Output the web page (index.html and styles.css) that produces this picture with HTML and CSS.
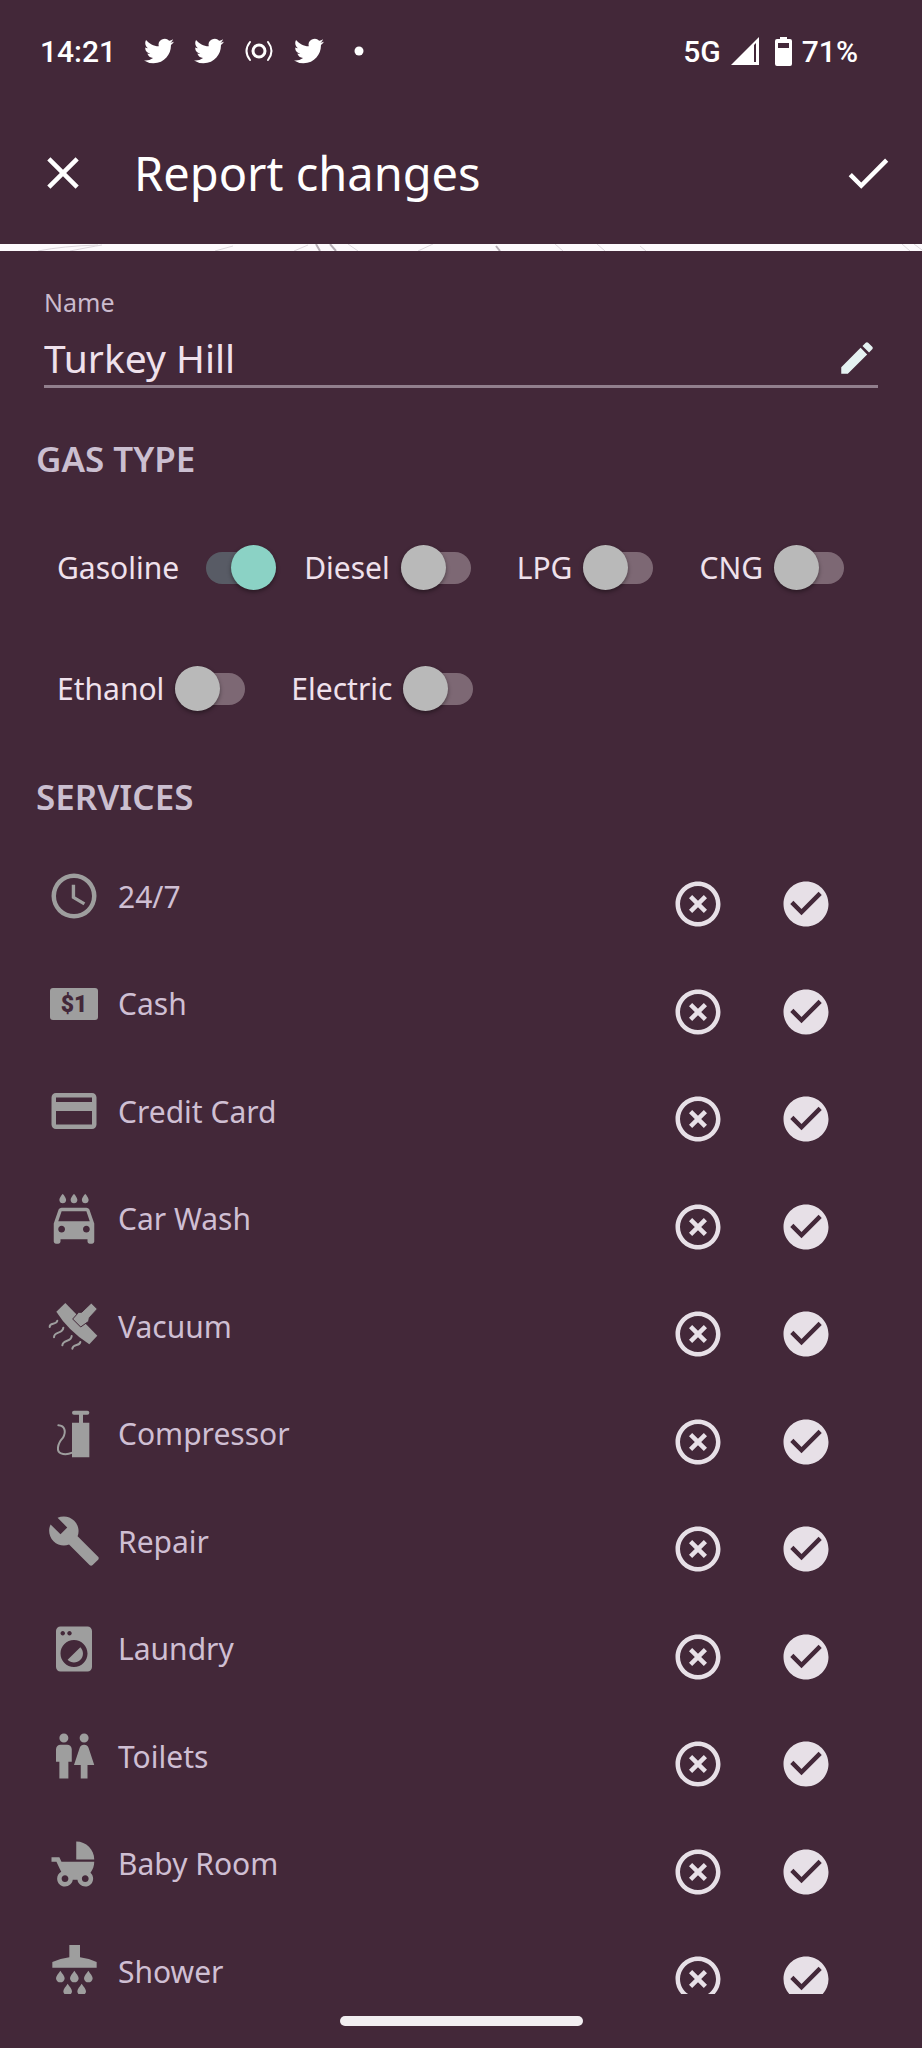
FILE: index.html
```html
<!DOCTYPE html>
<html lang="en">
<head>
  <meta charset="UTF-8">
  <meta name="viewport" content="width=device-width, initial-scale=1.0">
  <title>Report changes</title>
  <link rel="stylesheet" href="styles.css">
</head>
<body>

<!-- Shared icons -->
<svg class="sprite" aria-hidden="true">
  <symbol id="bird" viewBox="0 0 24 24"><path d="M23.953 4.57a10 10 0 01-2.825.775 4.958 4.958 0 002.163-2.723c-.951.555-2.005.959-3.127 1.184a4.92 4.92 0 00-8.384 4.482C7.69 8.095 4.067 6.13 1.64 3.162a4.822 4.822 0 00-.666 2.475c0 1.71.87 3.213 2.188 4.096a4.904 4.904 0 01-2.228-.616v.06a4.923 4.923 0 003.946 4.827 4.996 4.996 0 01-2.212.085 4.936 4.936 0 004.604 3.417 9.867 9.867 0 01-6.102 2.105c-.39 0-.779-.023-1.17-.067a13.995 13.995 0 007.557 2.209c9.053 0 13.998-7.496 13.998-13.985 0-.21 0-.42-.015-.63A9.935 9.935 0 0024 4.59z"/></symbol>
  <symbol id="no" viewBox="0 0 24 24"><path d="M14.59 8L12 10.59 9.41 8 8 9.41 10.59 12 8 14.59 9.41 16 12 13.41 14.59 16 16 14.59 13.41 12 16 9.41 14.59 8zM12 2C6.47 2 2 6.47 2 12s4.47 10 10 10 10-4.47 10-10S17.53 2 12 2zm0 18c-4.41 0-8-3.59-8-8s3.59-8 8-8 8 3.59 8 8-3.59 8-8 8z"/></symbol>
  <symbol id="yes" viewBox="0 0 24 24"><path d="M12 2C6.48 2 2 6.48 2 12s4.48 10 10 10 10-4.48 10-10S17.52 2 12 2zm-2 15l-5-5 1.41-1.41L10 14.17l7.59-7.59L19 8l-9 9z"/></symbol>
</svg>

<div class="status-bar">
  <span class="clock">14:21</span>
  <div class="notifications">
    <svg><use href="#bird"/></svg>
    <svg><use href="#bird"/></svg>
    <svg viewBox="0 0 30 30" class="line"><circle cx="15" cy="15" r="6" stroke-width="3"/><path d="M6 6q-7 9 0 18M24 6q7 9 0 18" stroke-width="2"/></svg>
    <svg><use href="#bird"/></svg>
    <svg viewBox="0 0 30 30"><circle cx="15" cy="15" r="4.5"/></svg>
  </div>
  <div class="system">
    <span>5G</span>
    <svg class="signal" viewBox="0 0 28 28"><path fill-rule="evenodd" d="M28 0v28H0zM23 8v17h2V6z"/></svg>
    <svg class="battery" viewBox="0 0 17 29"><path fill-rule="evenodd" d="M5 0h7v2h3q2 0 2 2v23q0 2-2 2H2q-2 0-2-2V4q0-2 2-2h3zM3 6v5h11V6z"/></svg>
    <span>71%</span>
  </div>
</div>

<header class="app-bar">
  <button class="icon-btn" aria-label="Close">
    <svg viewBox="0 0 24 24"><path d="M19 6.41L17.59 5 12 10.59 6.41 5 5 6.41 10.59 12 5 17.59 6.41 19 12 13.41 17.59 19 19 17.59 13.41 12z"/></svg>
  </button>
  <h1>Report changes</h1>
  <button class="icon-btn" aria-label="Save">
    <svg viewBox="0 0 24 24"><path d="M9 16.17L4.83 12l-1.42 1.41L9 19 21 7l-1.41-1.41z"/></svg>
  </button>
</header>

<!-- Sliver of the map above the form -->
<div class="map">
  <svg viewBox="0 0 922 7" preserveAspectRatio="none">
    <path d="M38 7q25-5 60-6M70 7q20-4 32-6M215 7l18-5M294 7l14-6M348 0l10 7M433 0l-15 7M555 0l8 7M597 0l8 7M640 2l6 5M902 0l8 7M914 0l8 6"/>
    <path class="road" d="M316 0l4 7M330 0l6 7M496 2l4 5"/>
  </svg>
</div>

<main>
  <div class="name">
    <label for="name">Name</label>
    <div class="field">
      <input type="text" id="name" value="Turkey Hill">
      <svg viewBox="0 0 24 24"><path d="M3 17.25V21h3.75L17.81 9.94l-3.75-3.75L3 17.25zM20.71 7.04c.39-.39.39-1.02 0-1.41l-2.34-2.34c-.39-.39-1.02-.39-1.41 0l-1.83 1.83 3.75 3.75 1.83-1.83z"/></svg>
    </div>
  </div>

  <h2>GAS TYPE</h2>
  <div class="fuels">
    <label class="fuel on">Gasoline <input type="checkbox" checked></label>
    <label class="fuel">Diesel <input type="checkbox"></label>
    <label class="fuel">LPG <input type="checkbox"></label>
    <label class="fuel">CNG <input type="checkbox"></label>
    <label class="fuel">Ethanol <input type="checkbox"></label>
    <label class="fuel">Electric <input type="checkbox"></label>
  </div>

  <h2>SERVICES</h2>
  <ul class="services">
    <li>
      <svg viewBox="0 0 24 24"><path d="M12 2a10 10 0 100 20 10 10 0 000-20zm0 18a8 8 0 110-16 8 8 0 010 16zM12.5 7H11v6l5.25 3.15.75-1.23-4.5-2.67z"/></svg>
      <span>24/7</span>
      <div class="choice">
        <button aria-label="No 24/7"><svg><use href="#no"/></svg></button>
        <button aria-label="Has 24/7"><svg><use href="#yes"/></svg></button>
      </div>
    </li>
    <li>
      <svg viewBox="0 0 54 54"><rect x="3" y="11" width="48" height="32" rx="3"/><text class="bill" x="27" y="35" text-anchor="middle">$1</text></svg>
      <span>Cash</span>
      <div class="choice">
        <button aria-label="No cash"><svg><use href="#no"/></svg></button>
        <button aria-label="Has cash"><svg><use href="#yes"/></svg></button>
      </div>
    </li>
    <li>
      <svg viewBox="0 0 24 24"><path d="M20 4H4c-1.11 0-1.99.89-1.99 2L2 18c0 1.11.89 2 2 2h16c1.11 0 2-.89 2-2V6c0-1.11-.89-2-2-2zm0 14H4v-6h16v6zm0-10H4V6h16v2z"/></svg>
      <span>Credit Card</span>
      <div class="choice">
        <button aria-label="No credit card"><svg><use href="#no"/></svg></button>
        <button aria-label="Has credit card"><svg><use href="#yes"/></svg></button>
      </div>
    </li>
    <li>
      <svg viewBox="0 0 24 24"><path d="M17 5c.83 0 1.5-.67 1.5-1.5 0-1-1.5-2.7-1.5-2.7s-1.5 1.7-1.5 2.7c0 .83.67 1.5 1.5 1.5zm-5 0c.83 0 1.5-.67 1.5-1.5 0-1-1.5-2.7-1.5-2.7s-1.5 1.7-1.5 2.7c0 .83.67 1.5 1.5 1.5zM7 5c.83 0 1.5-.67 1.5-1.5C8.5 2.5 7 .8 7 .8S5.5 2.5 5.5 3.5C5.5 4.33 6.17 5 7 5zm11.92 3.01C18.72 7.42 18.16 7 17.5 7h-11c-.66 0-1.21.42-1.42 1.01L3 14v8c0 .55.45 1 1 1h1c.55 0 1-.45 1-1v-1h12v1c0 .55.45 1 1 1h1c.55 0 1-.45 1-1v-8l-2.08-5.99zM6.5 18c-.83 0-1.5-.67-1.5-1.5S5.67 15 6.5 15s1.5.67 1.5 1.5S7.33 18 6.5 18zm11 0c-.83 0-1.5-.67-1.5-1.5s.67-1.5 1.5-1.5 1.5.67 1.5 1.5-.67 1.5-1.5 1.5zM5 13l1.5-4.5h11L19 13H5z"/></svg>
      <span>Car Wash</span>
      <div class="choice">
        <button aria-label="No car wash"><svg><use href="#no"/></svg></button>
        <button aria-label="Has car wash"><svg><use href="#yes"/></svg></button>
      </div>
    </li>
    <li>
      <svg viewBox="0 0 162 162"><path d="M55 12L28 38q35 56 99 98l24-26z"/><path class="cut" d="M133 12l18 18-24 26-2 11-24 17-24-24 18-20h9z"/><path class="line" d="M8 84c-1-16 20-4 23-19M21 115c0-20 26-8 28-29M46 139c2-20 27-8 28-28M76 149c2-16 22-6 24-20"/></svg>
      <span>Vacuum</span>
      <div class="choice">
        <button aria-label="No vacuum"><svg><use href="#no"/></svg></button>
        <button aria-label="Has vacuum"><svg><use href="#yes"/></svg></button>
      </div>
    </li>
    <li>
      <svg viewBox="0 0 162 162"><rect x="75" y="11" width="52" height="12" rx="6"/><path d="M96 20h12v27h19v104H75V47h21z"/><path class="line" d="M34 55C54 56 58 74 48 92C30 112 28 134 42 139C55 144 66 141 76 137"/></svg>
      <span>Compressor</span>
      <div class="choice">
        <button aria-label="No compressor"><svg><use href="#no"/></svg></button>
        <button aria-label="Has compressor"><svg><use href="#yes"/></svg></button>
      </div>
    </li>
    <li>
      <svg viewBox="0 0 24 24"><path d="M22.7 19l-9.1-9.1c.9-2.3.4-5-1.5-6.9-2-2-5-2.4-7.4-1.3L9 6 6 9 1.6 4.7C.4 7.1.9 10.1 2.9 12.1c1.9 1.9 4.6 2.4 6.9 1.5l9.1 9.1c.4.4 1 .4 1.4 0l2.3-2.3c.5-.4.5-1.1.1-1.4z"/></svg>
      <span>Repair</span>
      <div class="choice">
        <button aria-label="No repair"><svg><use href="#no"/></svg></button>
        <button aria-label="Has repair"><svg><use href="#yes"/></svg></button>
      </div>
    </li>
    <li>
      <svg viewBox="0 0 24 24"><path d="M9.17 16.83c1.56 1.56 4.1 1.56 5.66 0 1.56-1.56 1.56-4.1 0-5.66l-5.66 5.66zM18 2.01L6 2c-1.11 0-2 .89-2 2v16c0 1.11.89 2 2 2h12c1.11 0 2-.89 2-2V4c0-1.11-.89-1.99-2-1.99zM10 4c.55 0 1 .45 1 1s-.45 1-1 1-1-.45-1-1 .45-1 1-1zM7 4c.55 0 1 .45 1 1s-.45 1-1 1-1-.45-1-1 .45-1 1-1zm5 16c-3.31 0-6-2.69-6-6s2.69-6 6-6 6 2.69 6 6-2.69 6-6 6z"/></svg>
      <span>Laundry</span>
      <div class="choice">
        <button aria-label="No laundry"><svg><use href="#no"/></svg></button>
        <button aria-label="Has laundry"><svg><use href="#yes"/></svg></button>
      </div>
    </li>
    <li>
      <svg viewBox="0 0 24 24"><path d="M5.5 22v-7.5H4V9c0-1.1.9-2 2-2h3c1.1 0 2 .9 2 2v5.5H9.5V22h-4zM18 22v-6h3l-2.54-7.63C18.18 7.55 17.42 7 16.56 7h-.12c-.86 0-1.63.55-1.9 1.37L12 16h3v6h3zM7.5 6c1.11 0 2-.89 2-2s-.89-2-2-2-2 .89-2 2 .89 2 2 2zm9 0c1.11 0 2-.89 2-2s-.89-2-2-2-2 .89-2 2 .89 2 2 2z"/></svg>
      <span>Toilets</span>
      <div class="choice">
        <button aria-label="No toilets"><svg><use href="#no"/></svg></button>
        <button aria-label="Has toilets"><svg><use href="#yes"/></svg></button>
      </div>
    </li>
    <li>
      <svg viewBox="0 0 24 24"><path d="M13 2v8h8c0-4.42-3.58-8-8-8zm6.32 13.89C20.37 14.54 21 12.84 21 11H6.44l-.95-2H2v2h2.22s1.89 4.07 2.12 4.42c-1.1.59-1.84 1.75-1.84 3.08C4.5 20.43 6.07 22 8 22c1.76 0 3.22-1.3 3.46-3h2.08c.24 1.7 1.7 3 3.46 3 1.93 0 3.5-1.57 3.5-3.5 0-1.04-.46-1.97-1.18-2.61zM8 20c-.83 0-1.5-.67-1.5-1.5S7.17 17 8 17s1.5.67 1.5 1.5S8.83 20 8 20zm9 0c-.83 0-1.5-.67-1.5-1.5s.67-1.5 1.5-1.5 1.5.67 1.5 1.5-.67 1.5-1.5 1.5z"/></svg>
      <span>Baby Room</span>
      <div class="choice">
        <button aria-label="No baby room"><svg><use href="#no"/></svg></button>
        <button aria-label="Has baby room"><svg><use href="#yes"/></svg></button>
      </div>
    </li>
    <li>
      <svg viewBox="0 0 162 162"><path d="M67 3h32v37q28 4 50 14v17H16V54q24-10 51-14z"/><path id="drop" d="M40 80c6 9 13 16 13 23a13 12 0 01-26 0c0-7 7-14 13-23z"/><use href="#drop" x="42"/><use href="#drop" x="84"/><use href="#drop" x="22" y="39"/><use href="#drop" x="64" y="39"/></svg>
      <span>Shower</span>
      <div class="choice">
        <button aria-label="No shower"><svg><use href="#no"/></svg></button>
        <button aria-label="Has shower"><svg><use href="#yes"/></svg></button>
      </div>
    </li>
  </ul>
</main>

<div class="nav-bar"><div class="handle"></div></div>

</body>
</html>
```
FILE: styles.css
```css
* { box-sizing: border-box; }
body { margin: 0; height: 100vh; display: flex; flex-direction: column; background-color: #432839; color: #efe1ec; font-family: "Noto Sans", "Open Sans", sans-serif; font-size: 30px; }
svg { display: block; fill: currentColor; flex-shrink: 0; }
button { background: none; border: none; padding: 0; color: inherit; cursor: pointer; }
.sprite { position: absolute; width: 0; height: 0; }
.line { fill: none; stroke: currentColor; stroke-width: 6; stroke-linecap: round; }

.status-bar { flex-shrink: 0; display: flex; align-items: center; height: 102px; padding: 0 64px 0 40px; color: #fff; font-family: Roboto, sans-serif; font-size: 30px; font-weight: 500; }
.notifications { display: flex; gap: 20px; margin-left: 28px; }
.notifications svg { width: 30px; height: 30px; }
.system { display: flex; align-items: center; gap: 10px; margin-left: auto; }
.signal { width: 28px; height: 28px; }
.battery { width: 17px; height: 29px; margin-left: 6px; }

.app-bar { flex-shrink: 0; display: flex; align-items: center; height: 142px; padding: 0 27px 0 36px; color: #fff; }
.app-bar h1 { flex: 1; margin: 0 0 0 44px; font-size: 47px; font-weight: 400; }
.icon-btn svg { width: 54px; height: 54px; }

.map { flex-shrink: 0; height: 7px; background-color: #fdfafd; }
.map svg { width: 100%; height: 7px; fill: none; stroke: #dcd6dc; stroke-width: 1; }
.map .road { stroke: #b5adb5; stroke-width: 2; }

main { flex: 1; min-height: 0; overflow-y: auto; scrollbar-width: none; padding-top: 35px; }
.name { padding: 0 44px; }
.name label { display: block; font-size: 25px; line-height: 32px; color: #cbbbcd; }
.field { display: flex; align-items: center; height: 58px; margin-top: 12px; border-bottom: 3px solid #917f8d; }
.field input { flex: 1; min-width: 0; padding: 0; background: none; border: none; outline: none; color: inherit; font-family: inherit; font-size: 39px; }
.field svg { width: 42px; height: 42px; color: #e5f2f2; }

h2 { margin: 47px 36px 0; font-size: 35px; font-weight: 600; line-height: 48px; color: #cbbfd0; }
.fuels { display: flex; flex-wrap: wrap; row-gap: 76px; padding: 62px 0 62px 57px; }
.fuels + h2 { margin-top: 0; }
.fuel { display: flex; align-items: center; gap: 11px; height: 45px; margin-right: 46px; }
.fuel.on { gap: 27px; margin-right: 28px; }
.fuel input { appearance: none; display: grid; align-items: center; width: 70px; height: 45px; margin: 0; }
.fuel input::before { content: ""; grid-area: 1 / 1; height: 32px; border-radius: 16px; background-color: #7d6874; }
.fuel input::after { content: ""; grid-area: 1 / 1; width: 45px; height: 45px; border-radius: 50%; background-color: #b9b9b9; box-shadow: 0 2px 4px rgba(0, 0, 0, 0.4); }
.fuel input:checked::before { background-color: #585b65; }
.fuel input:checked::after { justify-self: end; background-color: #8bd2c5; }

.services { list-style: none; margin: 21px 0 0; padding: 0 89px 0 47px; color: #cfbfd3; }
.services li { display: flex; align-items: center; height: 107px; }
.services li:nth-child(odd) { height: 108px; }
.services svg { width: 54px; height: 54px; }
.services li > svg { margin-right: 17px; color: #9e9e9e; }
.choice { display: flex; gap: 54px; margin-left: auto; padding-top: 16px; color: #e7e0e7; }
.cut { stroke: #432839; stroke-width: 3; }
.bill { fill: #432839; font-family: Roboto, sans-serif; font-size: 23px; font-weight: 900; }

.nav-bar { flex-shrink: 0; display: flex; justify-content: center; align-items: center; height: 54px; }
.handle { width: 243px; height: 10px; border-radius: 5px; background-color: #f2eef1; }
```
